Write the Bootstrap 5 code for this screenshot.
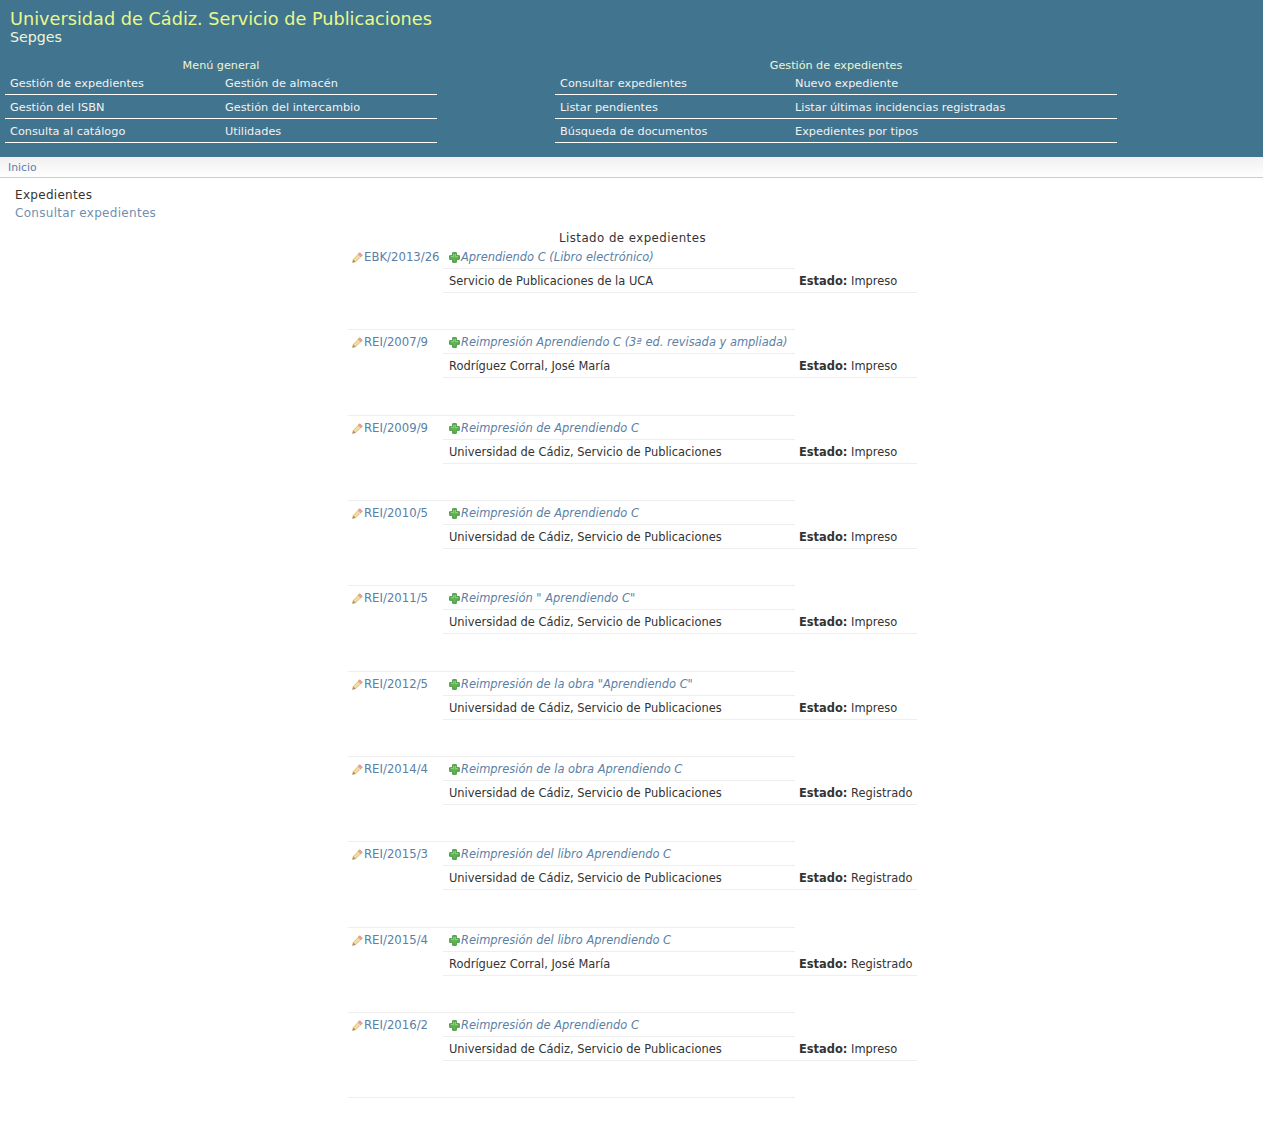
<!DOCTYPE html>
<html lang="es"><head><meta charset="utf-8"><title>Sepges</title>
<link rel="stylesheet" href="https://cdn.jsdelivr.net/npm/bootstrap@5.3.0/dist/css/bootstrap.min.css">
<style>
body{font-family:"DejaVu Sans",Verdana,sans-serif;font-size:11px;color:#333;background:#fff;min-height:1143px}
a{text-decoration:none;color:#5b7fa6}
.hdr{background:#41748f;height:157px;padding:10px 5px 0}
.hdr-t{font-size:17.7px;line-height:19px;color:#e8f98c;padding-left:5px}
.hdr-s{font-size:14.2px;line-height:17px;color:#f0f5d8;padding-left:5px}
.menus{margin-top:9px}
.mn{color:#fff}
.mn-a{width:432px;margin-right:118px}
.mn-b{width:562px}
.mn-h{text-align:center;color:#eef4d2;line-height:22px;height:16px;font-size:11.2px}
.mn-r{display:flex;height:24px;border-bottom:1px solid #fff;align-items:center;padding-top:3px;font-size:11.3px}
.mn-r a{color:#f2f2f2;padding-left:5px}
.mn-a a{width:215px}
.mn-b a{width:235px}
.crumb{height:21px;background:linear-gradient(#f0f0f0,#fff);border-bottom:1px solid #ccc;padding:4px 8px 2px;line-height:14px;font-size:10.8px}
.sect{padding:8px 15px 0;font-size:12px;line-height:18px;letter-spacing:.3px}
.sect a{color:#6f8fb0}
.sect div{color:#333}
.lst{width:569px;margin-left:348px}
.lst-h{text-align:center;font-size:11.8px;letter-spacing:.45px;line-height:16px;margin-top:8px;margin-bottom:-1px;width:569px}
.rec{display:grid;grid-template-columns:95px 352px 122px;grid-template-rows:24px 24px 37.33px;font-size:11.45px}
.rec a,.rec span,.rec b{white-space:nowrap}
.c1{padding:0 0 0 4px;display:flex;align-items:flex-start;line-height:24px;font-size:11.7px}
.c1 svg{flex:none;margin-top:7px;margin-right:1px}
.c2 svg{flex:none;margin-top:7px;margin-right:1px}
.c2{border-bottom:1px solid #eee;padding-left:6px;display:flex;align-items:flex-start;line-height:25px}
.c2 a{font-style:italic}
.c3{grid-column:2;border-bottom:1px solid #eee;padding-left:6px;line-height:25px}
.c4{grid-column:3;border-bottom:1px solid #eee;padding-left:4px;line-height:25px}
.c5{grid-column:1/3;border-bottom:1px solid #eee}
</style></head><body>
<svg width="0" height="0" class="position-absolute"><defs>
<symbol id="pen" viewBox="0 0 12 12"><path d="M.6 11.400l.8-3.300L8.400.900l2.700 2.700-7.200 7z" fill="#f4dc9c" stroke="#cfa860" stroke-width=".7"/><path d="M8.400.900l2.700 2.700-1.500 1.500L6.900 2.400z" fill="#ee9fac" stroke="#cf7c8a" stroke-width=".6"/><path d="M.6 11.400l.8-3.300 2.500 2.500z" fill="#a08c78"/></symbol>
<symbol id="plus" viewBox="0 0 12 12"><path d="M4 .7h4v3.300h3.300v4H8v3.300H4V8H.7V4H4z" fill="#62b452" stroke="#3a8f36" stroke-width="1"/><path d="M5 2v3H2M7 2v3h3" fill="none" stroke="#a6dc94" stroke-width=".8"/></symbol>
</defs></svg>
<header class="hdr">
<div class="hdr-t">Universidad de Cádiz. Servicio de Publicaciones</div>
<div class="hdr-s">Sepges</div>
<div class="menus d-flex">
<nav class="mn mn-a"><div class="mn-h">Menú general</div>
<div class="mn-r"><a href="#">Gestión de expedientes</a><a href="#">Gestión de almacén</a></div>
<div class="mn-r"><a href="#">Gestión del ISBN</a><a href="#">Gestión del intercambio</a></div>
<div class="mn-r"><a href="#">Consulta al catálogo</a><a href="#">Utilidades</a></div></nav>
<nav class="mn mn-b"><div class="mn-h">Gestión de expedientes</div>
<div class="mn-r"><a href="#">Consultar expedientes</a><a href="#">Nuevo expediente</a></div>
<div class="mn-r"><a href="#">Listar pendientes</a><a href="#">Listar últimas incidencias registradas</a></div>
<div class="mn-r"><a href="#">Búsqueda de documentos</a><a href="#">Expedientes por tipos</a></div></nav>
</div></header>
<div class="crumb"><a href="#">Inicio</a></div>
<div class="sect"><div>Expedientes</div><a href="#">Consultar expedientes</a></div>
<main class="lst"><div class="lst-h">Listado de expedientes</div>

<div class="rec"><div class="c1"><svg width="11" height="11"><use href="#pen"/></svg><a href="#">EBK/2013/26</a></div><div class="c2"><svg width="11" height="11"><use href="#plus"/></svg><a href="#">Aprendiendo C (Libro electrónico)</a></div><div class="c3"><span>Servicio de Publicaciones de la UCA</span></div><div class="c4"><b>Estado:</b> Impreso</div><div class="c5"></div></div>
<div class="rec"><div class="c1"><svg width="11" height="11"><use href="#pen"/></svg><a href="#">REI/2007/9</a></div><div class="c2"><svg width="11" height="11"><use href="#plus"/></svg><a href="#">Reimpresión Aprendiendo C (3ª ed. revisada y ampliada)</a></div><div class="c3"><span>Rodríguez Corral, José María</span></div><div class="c4"><b>Estado:</b> Impreso</div><div class="c5"></div></div>
<div class="rec"><div class="c1"><svg width="11" height="11"><use href="#pen"/></svg><a href="#">REI/2009/9</a></div><div class="c2"><svg width="11" height="11"><use href="#plus"/></svg><a href="#">Reimpresión de Aprendiendo C</a></div><div class="c3"><span>Universidad de Cádiz, Servicio de Publicaciones</span></div><div class="c4"><b>Estado:</b> Impreso</div><div class="c5"></div></div>
<div class="rec"><div class="c1"><svg width="11" height="11"><use href="#pen"/></svg><a href="#">REI/2010/5</a></div><div class="c2"><svg width="11" height="11"><use href="#plus"/></svg><a href="#">Reimpresión de Aprendiendo C</a></div><div class="c3"><span>Universidad de Cádiz, Servicio de Publicaciones</span></div><div class="c4"><b>Estado:</b> Impreso</div><div class="c5"></div></div>
<div class="rec"><div class="c1"><svg width="11" height="11"><use href="#pen"/></svg><a href="#">REI/2011/5</a></div><div class="c2"><svg width="11" height="11"><use href="#plus"/></svg><a href="#">Reimpresión " Aprendiendo C"</a></div><div class="c3"><span>Universidad de Cádiz, Servicio de Publicaciones</span></div><div class="c4"><b>Estado:</b> Impreso</div><div class="c5"></div></div>
<div class="rec"><div class="c1"><svg width="11" height="11"><use href="#pen"/></svg><a href="#">REI/2012/5</a></div><div class="c2"><svg width="11" height="11"><use href="#plus"/></svg><a href="#">Reimpresión de la obra "Aprendiendo C"</a></div><div class="c3"><span>Universidad de Cádiz, Servicio de Publicaciones</span></div><div class="c4"><b>Estado:</b> Impreso</div><div class="c5"></div></div>
<div class="rec"><div class="c1"><svg width="11" height="11"><use href="#pen"/></svg><a href="#">REI/2014/4</a></div><div class="c2"><svg width="11" height="11"><use href="#plus"/></svg><a href="#">Reimpresión de la obra Aprendiendo C</a></div><div class="c3"><span>Universidad de Cádiz, Servicio de Publicaciones</span></div><div class="c4"><b>Estado:</b> Registrado</div><div class="c5"></div></div>
<div class="rec"><div class="c1"><svg width="11" height="11"><use href="#pen"/></svg><a href="#">REI/2015/3</a></div><div class="c2"><svg width="11" height="11"><use href="#plus"/></svg><a href="#">Reimpresión del libro Aprendiendo C</a></div><div class="c3"><span>Universidad de Cádiz, Servicio de Publicaciones</span></div><div class="c4"><b>Estado:</b> Registrado</div><div class="c5"></div></div>
<div class="rec"><div class="c1"><svg width="11" height="11"><use href="#pen"/></svg><a href="#">REI/2015/4</a></div><div class="c2"><svg width="11" height="11"><use href="#plus"/></svg><a href="#">Reimpresión del libro Aprendiendo C</a></div><div class="c3"><span>Rodríguez Corral, José María</span></div><div class="c4"><b>Estado:</b> Registrado</div><div class="c5"></div></div>
<div class="rec"><div class="c1"><svg width="11" height="11"><use href="#pen"/></svg><a href="#">REI/2016/2</a></div><div class="c2"><svg width="11" height="11"><use href="#plus"/></svg><a href="#">Reimpresión de Aprendiendo C</a></div><div class="c3"><span>Universidad de Cádiz, Servicio de Publicaciones</span></div><div class="c4"><b>Estado:</b> Impreso</div><div class="c5"></div></div>
</main>
<script src="https://cdn.jsdelivr.net/npm/bootstrap@5.3.0/dist/js/bootstrap.bundle.min.js"></script>
</body></html>
